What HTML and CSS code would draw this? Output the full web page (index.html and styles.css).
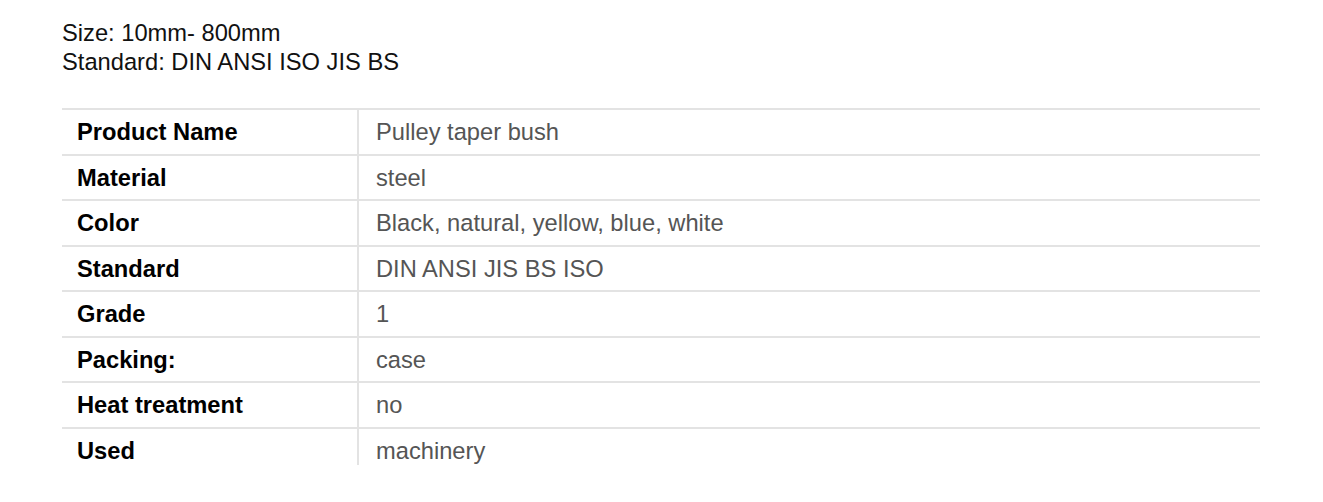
FILE: index.html
```html
<!DOCTYPE html>
<html lang="en">
<head>
<meta charset="utf-8">
<title>Pulley taper bush</title>
<link rel="stylesheet" href="styles.css">
</head>
<body>
<div class="page">
  <div class="intro">
    <p>Size: 10mm- 800mm</p>
    <p>Standard: DIN ANSI ISO JIS BS</p>
  </div>
  <table class="specs">
    <tbody>
      <tr><td class="label">Product Name</td><td class="value">Pulley taper bush</td></tr>
      <tr><td class="label">Material</td><td class="value">steel</td></tr>
      <tr><td class="label">Color</td><td class="value">Black, natural, yellow, blue, white</td></tr>
      <tr><td class="label">Standard</td><td class="value">DIN ANSI JIS BS ISO</td></tr>
      <tr><td class="label">Grade</td><td class="value">1</td></tr>
      <tr><td class="label">Packing:</td><td class="value">case</td></tr>
      <tr><td class="label">Heat treatment</td><td class="value">no</td></tr>
      <tr class="last"><td class="label">Used</td><td class="value">machinery</td></tr>
    </tbody>
  </table>
</div>
</body>
</html>
```

FILE: styles.css
```css
html, body {
  margin: 0;
  padding: 0;
  background: #ffffff;
}

body {
  font-family: "Liberation Sans", Arial, sans-serif;
  font-size: 23.7px;
}

.page {
  padding: 19px 63px 0 62px;
}

.intro {
  margin-bottom: 31px;
}

.intro p {
  margin: 0;
  line-height: 29px;
  color: #111111;
}

.specs {
  width: 1198px;
  border-collapse: separate;
  border-spacing: 0;
}

.specs td {
  padding: 9px 14px 8.17px 15px;
  line-height: 26.4px;
  border-bottom: 2px solid #e3e3e3;
  vertical-align: top;
  white-space: nowrap;
}

.specs tr:first-child td {
  border-top: 2px solid #e3e3e3;
}

.specs .label {
  width: 266px;
  font-weight: bold;
  color: #000000;
  border-right: 2px solid #e3e3e3;
}

.specs .value {
  color: #555555;
  padding-left: 17px;
}

.specs tr.last td {
  border-bottom: none;
  padding-bottom: 1px;
}
```
